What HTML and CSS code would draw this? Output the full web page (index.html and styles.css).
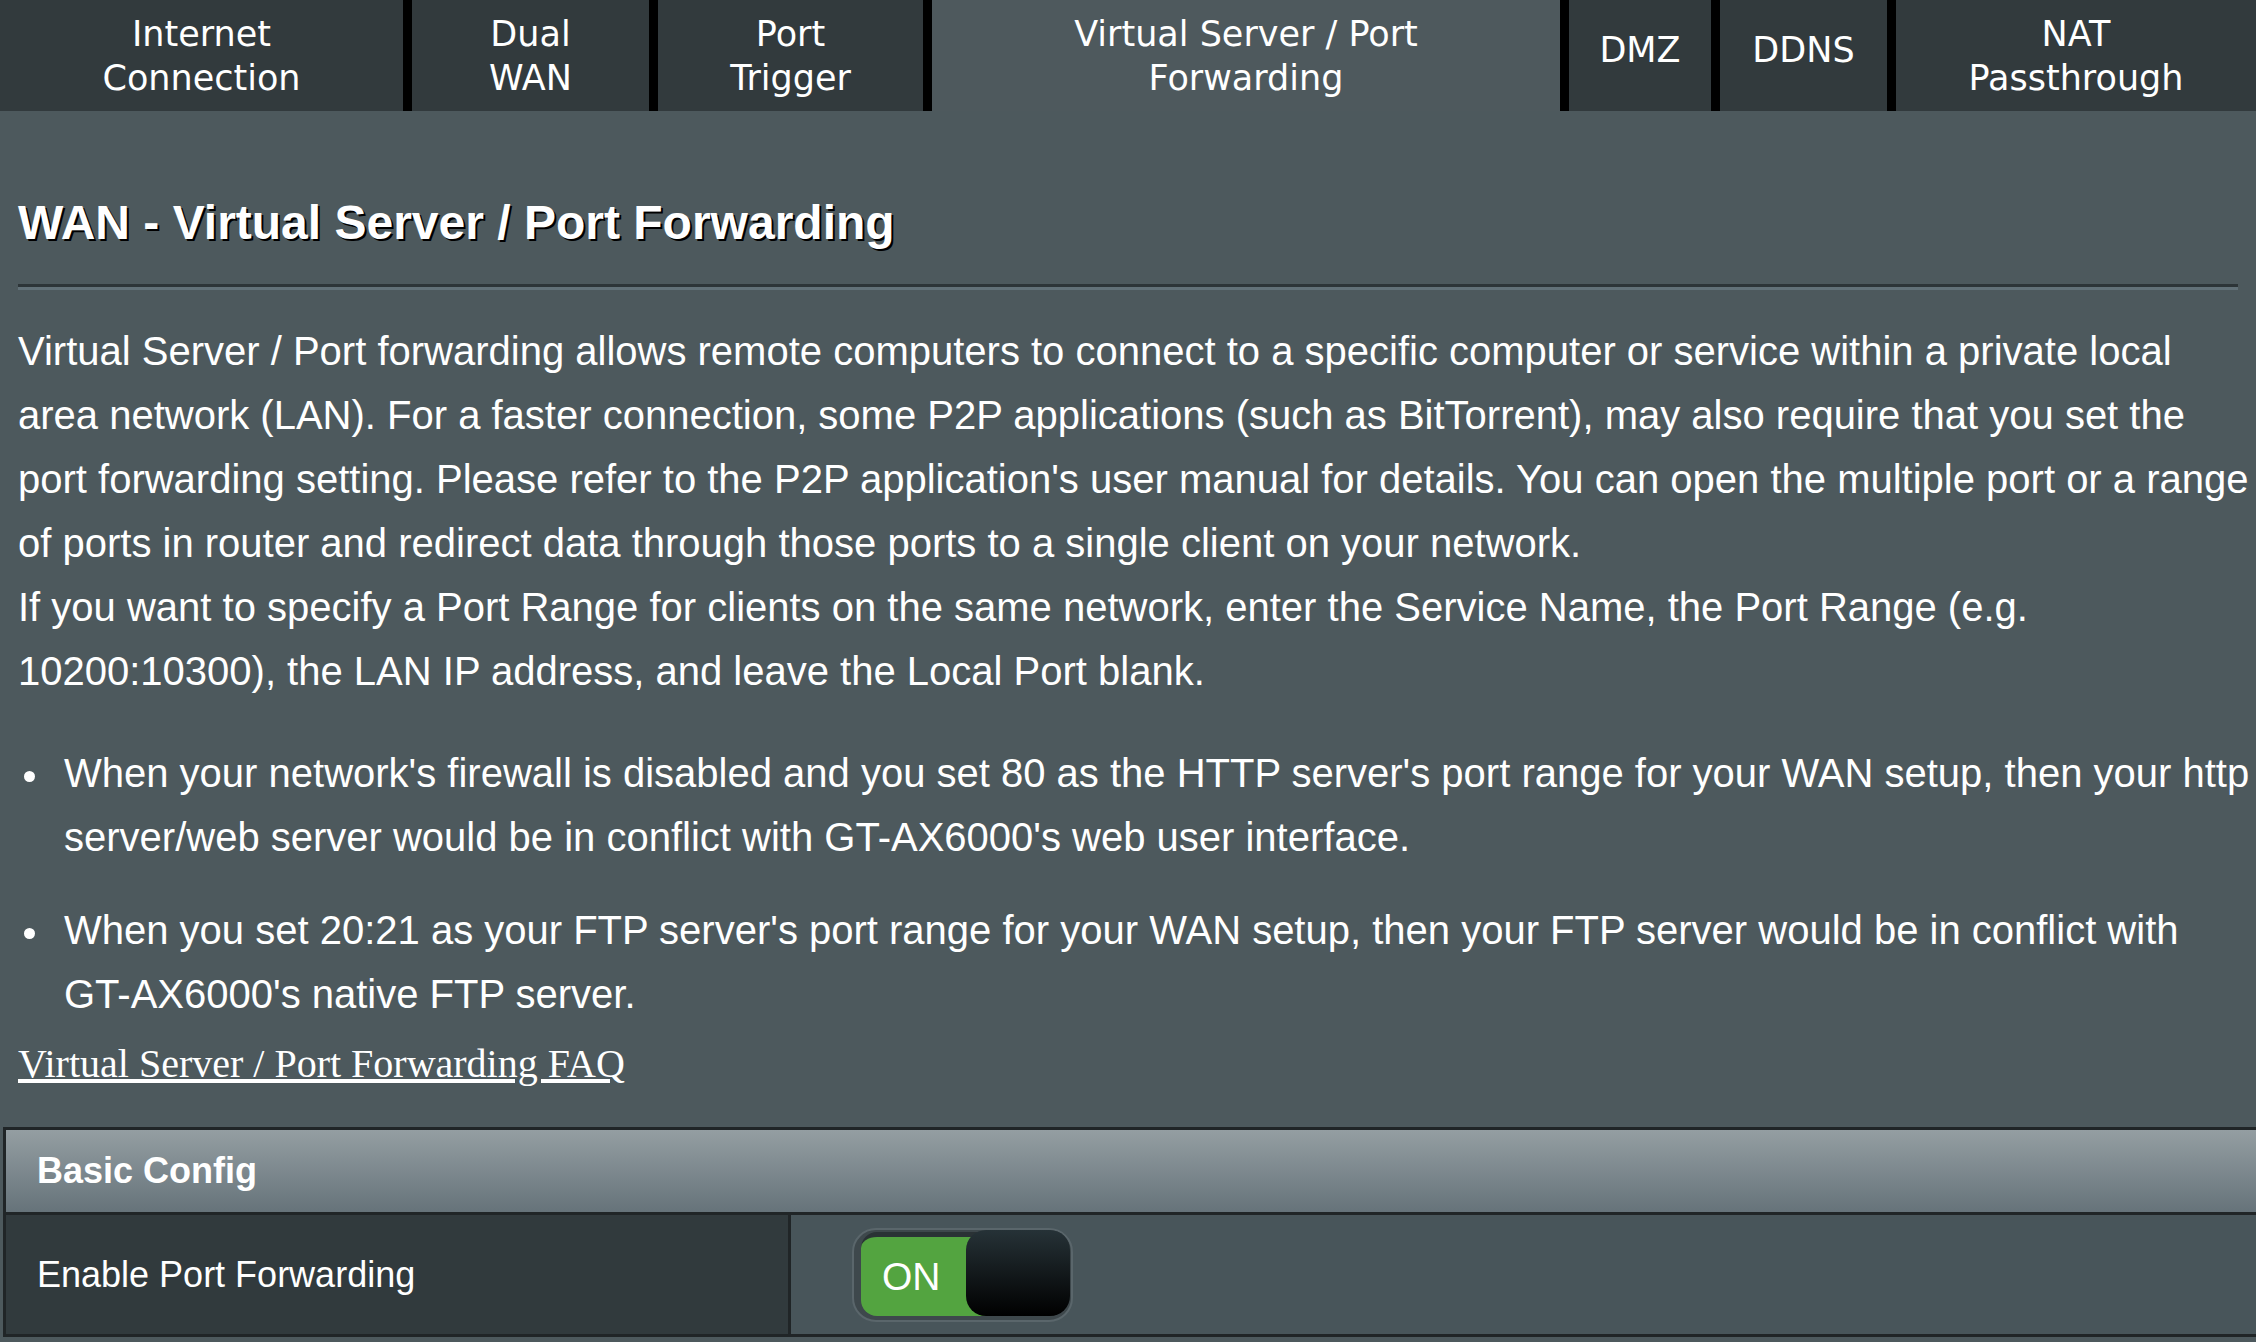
FILE: index.html
```html
<!DOCTYPE html>
<html lang="en">
<head>
<meta charset="utf-8">
<title>WAN - Virtual Server / Port Forwarding</title>
<link rel="stylesheet" href="styles.css">
</head>
<body>
<nav class="tabs">
  <div class="tab">Internet<br>Connection</div>
  <div class="tab">Dual<br>WAN</div>
  <div class="tab">Port<br>Trigger</div>
  <div class="tab active">Virtual Server / Port<br>Forwarding</div>
  <div class="tab single">DMZ</div>
  <div class="tab single">DDNS</div>
  <div class="tab">NAT<br>Passthrough</div>
</nav>
<main class="content">
  <h1 class="title">WAN - Virtual Server / Port Forwarding</h1>
  <div class="split"></div>
  <p class="desc">Virtual Server / Port forwarding allows remote computers to connect to a specific computer or service within a private local area network (LAN). For a faster connection, some P2P applications (such as BitTorrent), may also require that you set the port forwarding setting. Please refer to the P2P application's user manual for details. You can open the multiple port or a range of ports in router and redirect data through those ports to a single client on your network.<br>If you want to specify a Port Range for clients on the same network, enter the Service Name, the Port Range (e.g. 10200:10300), the LAN IP address, and leave the Local Port blank.</p>
  <ul class="notes">
    <li>When your network's firewall is disabled and you set 80 as the HTTP server's port range for your WAN setup, then your http server/web server would be in conflict with GT-AX6000's web user interface.</li>
    <li>When you set 20:21 as your FTP server's port range for your WAN setup, then your FTP server would be in conflict with GT-AX6000's native FTP server.</li>
  </ul>
  <div class="faq-row"><a class="faq" href="#">Virtual Server / Port Forwarding FAQ</a></div>
  <section class="config">
    <div class="config-head">Basic Config</div>
    <div class="config-label">Enable Port Forwarding</div>
    <div class="config-value">
      <div class="switch">
        <div class="switch-on">ON</div>
        <div class="knob"></div>
      </div>
    </div>
  </section>
</main>
</body>
</html>
```

FILE: styles.css
```css
html, body {
  margin: 0;
  padding: 0;
  overflow: hidden;
  background: #4d595d;
}

body {
  width: 2256px;
  height: 1342px;
  font-family: "Liberation Sans", Arial, Helvetica, sans-serif;
  color: #ffffff;
}

.tabs {
  display: grid;
  grid-template-columns: 403px 237px 265px 628px 142px 167px 1fr;
  column-gap: 9px;
  height: 111px;
  background: #000000;
}

.tab {
  display: flex;
  align-items: center;
  justify-content: center;
  text-align: center;
  background: #323a3d;
  font-family: "DejaVu Sans", Verdana, sans-serif;
  font-size: 35px;
  line-height: 44px;
  color: #ffffff;
}

.tab.single {
  padding-bottom: 11px;
}

.tab.active {
  background: #4e595d;
}

.content {
  padding: 0 2px 0 18px;
}

.title {
  margin: 84px 0 0;
  font-size: 48px;
  line-height: 56px;
  font-weight: bold;
  text-shadow: 2px 2px 0 #000000;
}

.split {
  margin: 33px 16px 0 0;
  height: 0;
  border-top: 3px solid #2d3538;
  border-bottom: 3px solid #627178;
}

.desc {
  margin: 29px 0 0;
  font-size: 40px;
  line-height: 64px;
}

.notes {
  margin: 38px 0 0;
  padding: 0 0 0 46px;
  list-style: none;
  font-size: 40px;
  line-height: 64px;
}

.notes li {
  position: relative;
}

.notes li + li {
  margin-top: 29px;
}

.notes li::before {
  content: "";
  position: absolute;
  left: -40px;
  top: 30px;
  width: 11px;
  height: 11px;
  border-radius: 50%;
  background: #ffffff;
}

.faq-row {
  margin-top: 15px;
  font-family: "Liberation Serif", "Times New Roman", serif;
  font-size: 40px;
  line-height: 46px;
}

.faq {
  color: #ffffff;
  text-decoration: underline;
}

.config {
  margin: 40px 0 0 -15px;
  width: 2280px;
  display: grid;
  grid-template-columns: 782px 1fr;
  gap: 3px;
  padding: 3px;
  background: #202527;
}

.config-head {
  grid-column: 1 / -1;
  height: 82px;
  box-sizing: border-box;
  padding-left: 31px;
  display: flex;
  align-items: center;
  font-size: 36px;
  font-weight: bold;
  background: linear-gradient(#949ea2, #66737a);
}

.config-label {
  height: 119px;
  box-sizing: border-box;
  padding-left: 31px;
  display: flex;
  align-items: center;
  font-size: 36px;
  background: #313a3d;
}

.config-value {
  padding-left: 61px;
  display: flex;
  align-items: center;
  background: #48555a;
}

.switch {
  position: relative;
  width: 221px;
  height: 94px;
  box-sizing: border-box;
  border: 2px solid #5a666b;
  border-radius: 24px;
  background: #3e484c;
}

.switch-on {
  position: absolute;
  left: 7px;
  top: 2px;
  width: 130px;
  height: 79px;
  box-sizing: content-box;
  padding-left: 21px;
  border-top: 5px solid #2a3235;
  border-radius: 16px 0 0 16px;
  background: #53a440;
  font-size: 39px;
  line-height: 79px;
  color: #ffffff;
}

.knob {
  position: absolute;
  right: 1px;
  top: 0;
  width: 104px;
  height: 86px;
  border-radius: 20px;
  background: linear-gradient(#263237, #000000);
}
```
